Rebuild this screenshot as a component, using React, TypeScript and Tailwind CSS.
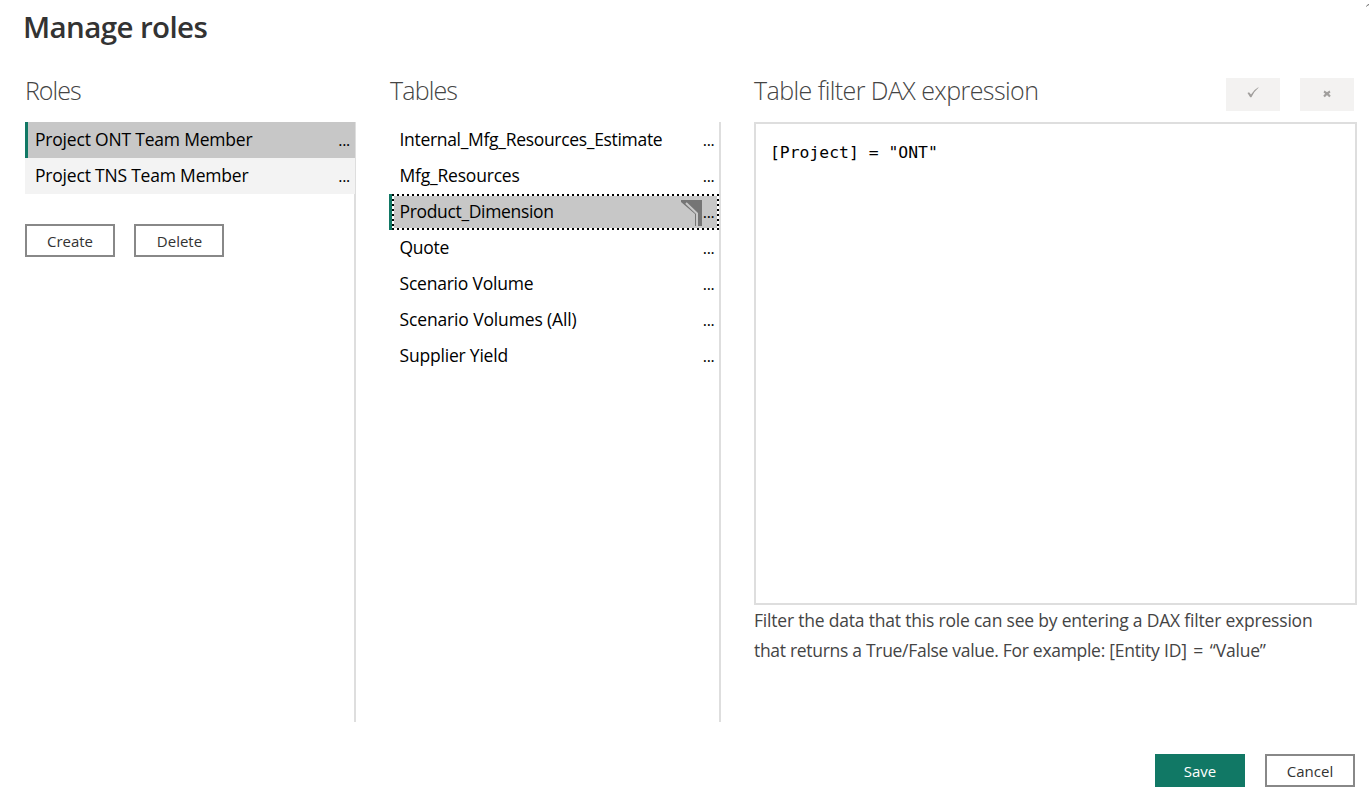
const roles = [
  { name: 'Project ONT Team Member', tracking: 'tracking-[-0.2px]', selected: true },
  { name: 'Project TNS Team Member', tracking: 'tracking-[-0.2px]', selected: false },
];

const tables = [
  { name: 'Internal_Mfg_Resources_Estimate', tracking: 'tracking-[-0.31px]', selected: false },
  { name: 'Mfg_Resources', tracking: 'tracking-[-0.2px]', selected: false },
  { name: 'Product_Dimension', tracking: 'tracking-[-0.34px]', selected: true },
  { name: 'Quote', tracking: 'tracking-[-0.3px]', selected: false },
  { name: 'Scenario Volume', tracking: 'tracking-[-0.22px]', selected: false },
  { name: 'Scenario Volumes (All)', tracking: 'tracking-[-0.14px]', selected: false },
  { name: 'Supplier Yield', tracking: 'tracking-[-0.2px]', selected: false },
];

const rowBase = 'flex h-9 items-center pb-0.5 text-[17.5px]';
const headingBase = 'h-[52px] text-[25px] leading-[41px] font-light text-[#444]';
const buttonBase = 'h-[33px] w-[90px] pt-0.5 text-[15px]';
const dotsAcross = 'h-0.5 bg-[repeating-linear-gradient(90deg,#000_0_2px,#fff_2px_5px)]';
const dotsDown = 'w-0.5 bg-[repeating-linear-gradient(#fff_0_3px,#000_3px_5px)]';

function FilterIcon() {
  return (
    <svg className="mt-1 mr-px ml-auto block h-[26px] w-[21px]" viewBox="0 0 21 26">
      <path d="M0 0H21V26H14V14L0 2Z" fill="#757575" />
      <path d="M5 3L16 13.5V26" fill="none" stroke="#c8c8c8" strokeWidth="2" />
    </svg>
  );
}

function MoreDots() {
  return <span className="pt-0.5 text-[16px] tracking-[-0.3px]">...</span>;
}

export default function App() {
  return (
    <main className="flex h-[802px] w-[1369px] flex-col overflow-hidden bg-white font-['Open_Sans',sans-serif] text-black">
      <header className="flex h-[70px] justify-between pl-[23px]">
        <h1 className="pt-[7px] text-[29.5px] leading-[40px] font-semibold tracking-[-0.6px] text-[#333]">Manage roles</h1>
        <svg className="mt-[3px] h-1 w-[3px]" viewBox="0 0 3 4">
          <path d="M0.5 3.5L2 1.5L3 2" stroke="#666" fill="none" />
        </svg>
      </header>
      <div className="flex h-[652px] pl-[25px]">
        <section className="flex w-[331px] flex-col">
          <h2 className={`${headingBase} tracking-[-1px]`}>Roles</h2>
          <div className="flex h-[600px] flex-col border-r-2 border-[#dedede]">
            {roles.map((r) => (
              <div
                key={r.name}
                className={`${rowBase} -mr-px justify-between pr-[5px] ${r.selected ? 'border-l-[3px] border-[#117865] bg-[#c7c7c7] pl-[7px]' : 'bg-[#f3f3f3] pl-[10px]'}`}
              >
                <span className={r.tracking}>{r.name}</span>
                <MoreDots />
              </div>
            ))}
            <div className="mt-[30px] flex gap-[19px]">
              <button className={`${buttonBase} border-2 border-[#888] text-[#333]`}>Create</button>
              <button className={`${buttonBase} border-2 border-[#888] pl-px text-[#333]`}>Delete</button>
            </div>
          </div>
        </section>
        <section className="ml-[33px] flex w-[332px] flex-col">
          <h2 className={`${headingBase} pl-px tracking-[-0.85px]`}>Tables</h2>
          <div className="flex h-[600px] flex-col border-r-2 border-[#dedede]">
            {tables.map((r) =>
              r.selected ? (
                <div key={r.name} className="flex h-9 flex-col border-l-[3px] border-[#117865]">
                  <div className={dotsAcross} />
                  <div className="flex h-8">
                    <div className={dotsDown} />
                    <div className="flex flex-1 items-center bg-[#c7c7c7] pr-[2.5px] pb-0.5 pl-[5.5px] text-[17.5px]">
                      <span className={r.tracking}>{r.name}</span>
                      <FilterIcon />
                      <MoreDots />
                    </div>
                    <div className={dotsDown} />
                  </div>
                  <div className={dotsAcross} />
                </div>
              ) : (
                <div key={r.name} className={`${rowBase} justify-between pr-[4.5px] pl-[10.5px]`}>
                  <span className={r.tracking}>{r.name}</span>
                  <MoreDots />
                </div>
              ),
            )}
          </div>
        </section>
        <section className="ml-[33px] flex w-[603px] flex-col">
          <div className="flex h-[52px]">
            <h2 className={`${headingBase} flex-1 tracking-[-0.57px]`}>Table filter DAX expression</h2>
            <div className="mt-2 mr-[3px] flex gap-5">
              <button aria-label="Apply" className="flex h-[33px] w-[54px] items-center justify-center bg-[#f3f2f1]">
                <svg className="-mt-1 h-[11px] w-3" viewBox="0 0 12 11">
                  <path d="M0.5 6L2 5.2L4 7.6Q7 2.6 11.3 0.3L11.5 0.8Q7.5 4 4.4 10.2H3.2Z" fill="#a19f9d" />
                </svg>
              </button>
              <button aria-label="Discard" className="flex h-[33px] w-[54px] items-center justify-center bg-[#f3f2f1]">
                <svg className="-mt-px h-2 w-2" viewBox="0 0 8 8">
                  <path d="M1 1.5Q4 3 7 6.5M7 1.5Q4 3 1 6.5" fill="none" stroke="#a19f9d" strokeWidth="2" />
                </svg>
              </button>
            </div>
          </div>
          <div className="h-[483px] border-2 border-[#dedede] px-[14px] pt-[17px] font-['DejaVu_Sans_Mono',monospace] text-[16.4px]">
            {'[Project] = "ONT"'}
          </div>
          <p className="text-[17.5px] leading-[30px] tracking-[-0.2px] whitespace-nowrap text-[#444]">
            Filter the data that this role can see by entering a DAX filter expression
            <br />
            <span className="tracking-[-0.3px]">that returns a True/False value. For example: </span>
            [Entity ID]<span className="[word-spacing:2.3px]"> = </span>“Value”
          </p>
        </section>
      </div>
      <div className="flex justify-end gap-5 pt-8 pr-[14px]">
        <button className={`${buttonBase} bg-[#117865] text-white`}>Save</button>
        <button className={`${buttonBase} border-2 border-[#888] text-[#333]`}>Cancel</button>
      </div>
    </main>
  );
}
